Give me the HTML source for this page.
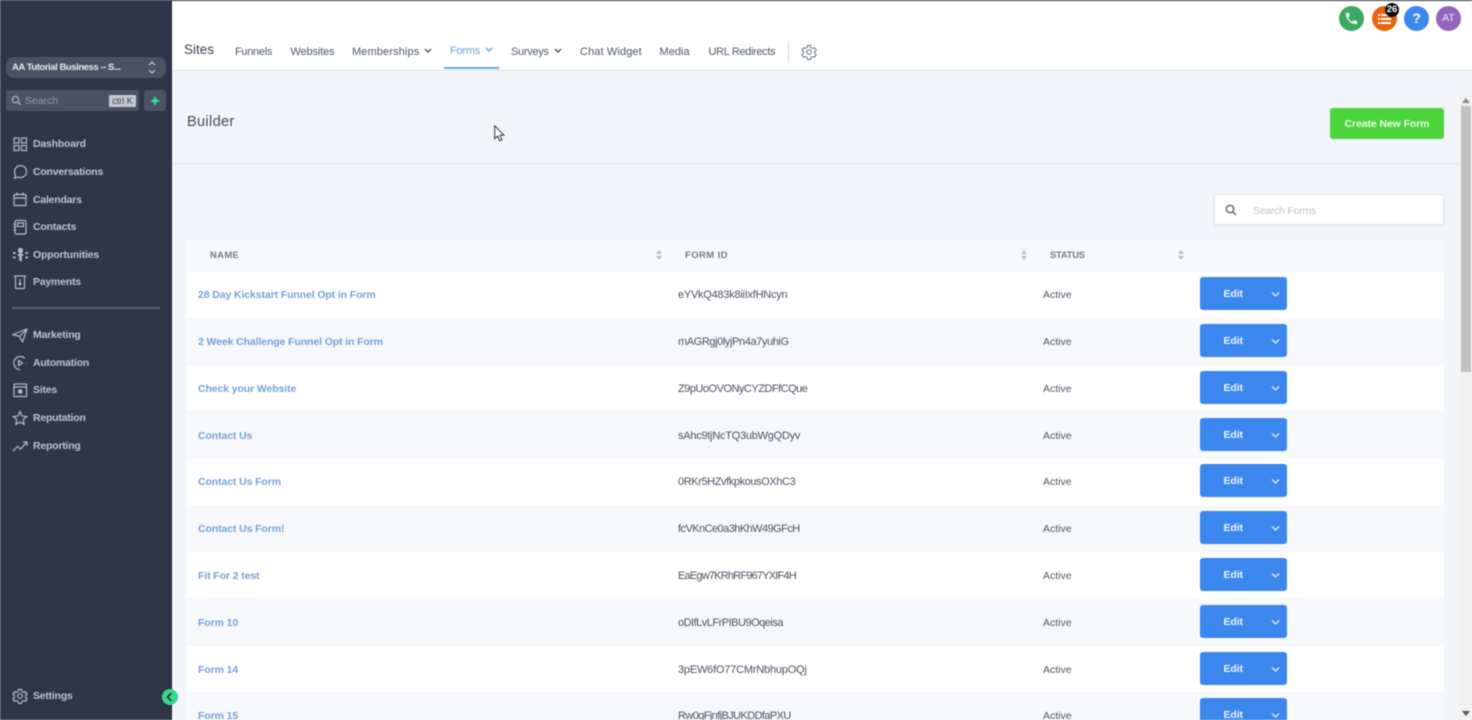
<!DOCTYPE html>
<html lang="en">
<head>
<meta charset="utf-8">
<title>Forms Builder</title>
<style>
html,body{margin:0;padding:0;width:1472px;height:720px;overflow:hidden;background:#f2f5f9;font-family:"Liberation Sans",Arial,sans-serif}
*{box-sizing:border-box}
.a{position:absolute;white-space:nowrap}
#root{position:absolute;left:0;top:0;width:1472px;height:720px;overflow:hidden;filter:blur(.5px)}
#side{position:absolute;left:0;top:0;width:172px;height:720px;background:#2d3748;border-right:1px solid #1d2430}
.nav{position:absolute;left:33px;font-size:10.5px;font-weight:bold;color:#bcc4cf;line-height:14px;white-space:nowrap;letter-spacing:-.22px}
.ic{position:absolute;left:12px;width:16px;height:16px;fill:none;stroke:#b4bcc8;stroke-width:1.2}
#top{position:absolute;left:172px;top:0;width:1300px;height:71px;background:#fff;border-bottom:1px solid #e3e6ea;border-top:1px solid #333}
.tab{position:absolute;top:45px;font-size:11px;line-height:14px;color:#4f5a68;white-space:nowrap;letter-spacing:.12px}
.circ{position:absolute;top:6px;width:25px;height:25px;border-radius:50%}
.row{position:absolute;left:186px;width:1258px;height:46px}
.w{background:#fff}.g{background:#f7f8fb}
.n{position:absolute;left:198px;margin-top:1px;font-size:10.5px;font-weight:bold;color:#74a2d6;line-height:14px;white-space:nowrap;letter-spacing:-.11px}
.i{position:absolute;left:678px;margin-top:1px;font-size:11px;color:#4a5360;line-height:14px;white-space:nowrap}
.s{position:absolute;left:1043px;margin-top:1px;font-size:10.5px;color:#4f5864;line-height:14px}
.b{position:absolute;left:1200px;width:87px;height:33px;background:#3b87ee;border-radius:3px;color:#fff}
.b span{position:absolute;left:23.5px;top:10px;font-size:10.5px;line-height:14px;font-weight:bold;color:#eef5ff;letter-spacing:-.1px}
.b svg{position:absolute;left:71px;top:14px;width:9px;height:7px;fill:none;stroke:#e6f0ff;stroke-width:1.3}
.h{position:absolute;top:250px;font-size:9.5px;line-height:12px;font-weight:bold;color:#757d88;letter-spacing:.3px}
.sort{position:absolute;top:250px;width:6px;height:10px;fill:#b7bdc6}
</style>
</head>
<body>
<div id="root">

<div id="side">
  <div class="a" style="left:6px;top:57px;width:160px;height:21px;border-radius:8px;background:#4a5363"></div>
  <div class="a" style="left:12px;top:61px;font-size:9.5px;line-height:13px;font-weight:bold;color:#e6e9ee;letter-spacing:-.44px">AA Tutorial Business -- S...</div>
  <svg class="a" style="left:147px;top:60px;width:10px;height:15px;fill:none;stroke:#c6ccd5;stroke-width:1.2" viewBox="0 0 10 15"><path d="M2 5l3-3 3 3M2 10l3 3 3-3"/></svg>
  <div class="a" style="left:6px;top:90px;width:133px;height:21px;border-radius:3px;background:#4a5363"></div>
  <svg class="a" style="left:11px;top:95px;width:11px;height:11px;fill:none;stroke:#a4acb8;stroke-width:1.3" viewBox="0 0 11 11"><circle cx="4.5" cy="4.5" r="3.2"/><path d="M7 7l3 3"/></svg>
  <div class="a" style="left:25px;top:94px;font-size:10.5px;line-height:14px;color:#8f98a5">Search</div>
  <div class="a" style="left:109px;top:95px;width:27px;height:12px;background:#c3c8cf;border-radius:1px;font-size:9px;line-height:12px;color:#3a4350;text-align:center">ctrl K</div>
  <div class="a" style="left:144px;top:90px;width:22px;height:21px;border-radius:3px;background:#4a5363"></div>
  <svg class="a" style="left:150px;top:96px;width:10px;height:10px;fill:#3ed49a" viewBox="0 0 10 10"><path d="M5 0L6.500 3.500 10 5 6.500 6.500 5 10 3.500 6.500 0 5 3.500 3.500z"/></svg>

  <svg class="ic" style="top:136px" viewBox="0 0 16 16"><rect x="2" y="2" width="5" height="5"/><rect x="9.5" y="2" width="5" height="5"/><rect x="2" y="9.5" width="5" height="5"/><rect x="9.5" y="9.5" width="5" height="5"/></svg>
  <div class="nav" style="top:137px">Dashboard</div>
  <svg class="ic" style="top:164px" viewBox="0 0 16 16"><path d="M2.500 14l1-3.200A6 6 0 1 1 6 13z"/></svg>
  <div class="nav" style="top:165px">Conversations</div>
  <svg class="ic" style="top:191px" viewBox="0 0 16 16"><rect x="2" y="3.500" width="12" height="11" rx="1"/><path d="M2 7h12M5 1.500v3M11 1.500v3"/></svg>
  <div class="nav" style="top:192.500px">Calendars</div>
  <svg class="ic" style="top:219px" viewBox="0 0 16 16"><rect x="3" y="1.500" width="11" height="13.500" rx="1.500"/><rect x="5.500" y="4" width="6" height="3.500"/><path d="M1.500 5h2.500M1.500 8h2.500M1.500 11h2.500"/></svg>
  <div class="nav" style="top:220px">Contacts</div>
  <svg class="ic" style="top:247px" viewBox="0 0 16 16"><circle cx="8.500" cy="3.500" r="2" fill="#b4bcc8"/><path d="M8.500 6v8" stroke-width="2.600"/><path d="M5.500 7.500l3 1.500 3-1.500" stroke-width="1.500"/><path d="M1 6h2.500M1 10.500h2.500M13.500 6h2.500M13.500 10.500h2.500" stroke-width="2"/></svg>
  <div class="nav" style="top:248px">Opportunities</div>
  <svg class="ic" style="top:274px" viewBox="0 0 16 16"><path d="M3.500 2h9v12.500h-9zM2 2h12M8 5v6M6.500 9.500L8 11l1.500-1.500"/></svg>
  <div class="nav" style="top:275px">Payments</div>

  <div class="a" style="left:12px;top:307px;width:148px;height:2px;background:#5b6474"></div>

  <svg class="ic" style="top:327px" viewBox="0 0 16 16"><path d="M1 7.500L15 2l-4.500 13-3-5.500zM7.500 9.500L15 2"/></svg>
  <div class="nav" style="top:328px">Marketing</div>
  <svg class="ic" style="top:355px" viewBox="0 0 16 16"><path d="M13 3.500A6.500 6.500 0 1 0 8 14.500M14.500 8v.5"/><path d="M6.500 5.500v5l4-2.500z"/></svg>
  <div class="nav" style="top:356px">Automation</div>
  <svg class="ic" style="top:382px" viewBox="0 0 16 16"><rect x="2" y="2" width="12.500" height="12.500"/><path d="M2 5h12.500"/><circle cx="8.200" cy="9.500" r="1.700" fill="#b4bcc8"/></svg>
  <div class="nav" style="top:383px">Sites</div>
  <svg class="ic" style="top:410px" viewBox="0 0 16 16"><path d="M8 1.500l2 4.500 4.800.5-3.600 3.200 1 4.800L8 12l-4.200 2.500 1-4.800L1.200 6.500 6 6z"/></svg>
  <div class="nav" style="top:411px">Reputation</div>
  <svg class="ic" style="top:438px" viewBox="0 0 16 16"><path d="M1 13l4.500-4.500 3 2.500L14.500 4.500M11 4h4v4"/></svg>
  <div class="nav" style="top:439px">Reporting</div>

  <svg class="ic" style="top:688px" viewBox="0 0 16 16"><circle cx="8" cy="8" r="2.300"/><path d="M6.500 1.500h3l.4 2 1.800 1 1.900-.7 1.500 2.600-1.500 1.300v1.600l1.500 1.300-1.500 2.600-1.900-.7-1.800 1-.4 2h-3l-.4-2-1.800-1-1.900.7L.9 10.600l1.500-1.300V7.700L.9 6.400l1.500-2.600 1.900.7 1.800-1z"/></svg>
  <div class="nav" style="top:689px">Settings</div>
</div>

<div id="top">
  <div class="a" style="left:12px;top:40px;font-size:13.5px;line-height:18px;color:#3a424e">Sites</div>
</div>
<div class="tab" style="left:235px;letter-spacing:-.3px">Funnels</div>
<div class="tab" style="left:290.500px;letter-spacing:-.13px">Websites</div>
<div class="tab" style="left:352px">Memberships</div>
<svg class="a" style="left:424px;top:48px;width:8px;height:6px;fill:none;stroke:#4f5a68;stroke-width:1.500" viewBox="0 0 8 6"><path d="M1 1l3 3 3-3"/></svg>
<div class="tab" style="left:450px;top:44px;color:#6ba5d6;letter-spacing:-.2px">Forms</div>
<svg class="a" style="left:485px;top:47px;width:8px;height:6px;fill:none;stroke:#6ba5d6;stroke-width:1.500" viewBox="0 0 8 6"><path d="M1 1l3 3 3-3"/></svg>
<div class="a" style="left:444px;top:67px;width:55px;height:1.500px;background:#6ba5d6"></div>
<div class="tab" style="left:511px;letter-spacing:-.3px">Surveys</div>
<svg class="a" style="left:554px;top:48px;width:8px;height:6px;fill:none;stroke:#4f5a68;stroke-width:1.500" viewBox="0 0 8 6"><path d="M1 1l3 3 3-3"/></svg>
<div class="tab" style="left:580px">Chat Widget</div>
<div class="tab" style="left:659.500px;letter-spacing:.05px">Media</div>
<div class="tab" style="left:708.500px;letter-spacing:-.34px">URL Redirects</div>
<div class="a" style="left:788px;top:41px;width:1px;height:22px;background:#d5d9de"></div>
<svg class="a" style="left:801px;top:44px;width:16px;height:16px;fill:none;stroke:#68717d;stroke-width:1" viewBox="0 0 16 16"><circle cx="8" cy="8" r="2.300"/><path d="M6.500 1.500h3l.4 2 1.800 1 1.900-.7 1.500 2.600-1.500 1.300v1.600l1.500 1.300-1.500 2.600-1.900-.7-1.800 1-.4 2h-3l-.4-2-1.800-1-1.900.7L.9 10.600l1.500-1.300V7.700L.9 6.400l1.500-2.600 1.900.7 1.800-1z"/></svg>

<div class="circ" style="left:1339px;background:#3aa962"></div>
<svg class="a" style="left:1344px;top:11px;width:15px;height:15px;fill:#fff" viewBox="0 0 24 24"><path d="M6.600 10.800a15 15 0 0 0 6.600 6.600l2.200-2.200a1 1 0 0 1 1-.25 11 11 0 0 0 3.600.6 1 1 0 0 1 1 1V20a1 1 0 0 1-1 1A17 17 0 0 1 3 4a1 1 0 0 1 1-1h3.500a1 1 0 0 1 1 1 11 11 0 0 0 .6 3.600 1 1 0 0 1-.25 1z"/></svg>
<div class="circ" style="left:1372px;background:#e8640f"></div>
<svg class="a" style="left:1378px;top:13px;width:13px;height:12px;fill:#fff" viewBox="0 0 13 12"><rect x="0" y="1" width="2" height="2"/><rect x="3" y="1" width="7" height="2"/><rect x="0" y="5" width="2" height="2"/><rect x="3" y="5" width="10" height="2"/><rect x="0" y="9" width="2" height="2"/><rect x="3" y="9" width="10" height="2"/></svg>
<div class="a" style="left:1385px;top:3px;width:14px;height:14px;border-radius:50%;background:#0b0b0d;color:#fff;font-size:9.500px;line-height:14px;font-weight:bold;text-align:center">26</div>
<div class="circ" style="left:1404px;background:#3b87ee;color:#fff;font-size:14px;line-height:25px;font-weight:bold;text-align:center">?</div>
<div class="circ" style="left:1436px;background:#9365bd;color:#eee6f5;font-size:10.500px;line-height:25px;text-align:center">AT</div>

<div class="a" style="left:187px;top:112.500px;font-size:14.500px;line-height:18px;color:#434b57;letter-spacing:.35px">Builder</div>
<div class="a" style="left:172px;top:163px;width:1288px;height:1px;background:#e2e5e9"></div>

<svg class="a" style="left:494px;top:125px;width:11px;height:17px" viewBox="0 0 11 17"><path d="M.7.800v13l3-2.700 2 4.600 2.300-1-2-4.500h4z" fill="#fff" stroke="#333" stroke-width="1"/></svg>

<div class="a" style="left:1330px;top:108px;width:114px;height:31px;border-radius:3px;background:#4cd43a;color:#e8fbe4;font-size:10.500px;line-height:32px;font-weight:bold;text-align:center;letter-spacing:-.1px">Create New Form</div>

<div class="a" style="left:1214px;top:194px;width:230px;height:31px;background:#fff;border:1px solid #e2e5e9;border-radius:2px;box-shadow:0 1px 2px rgba(0,0,0,.06)"></div>
<svg class="a" style="left:1225px;top:204px;width:12px;height:12px;fill:none;stroke:#5a626d;stroke-width:1.400" viewBox="0 0 12 12"><circle cx="5" cy="5" r="3.700"/><path d="M8 8l3 3"/></svg>
<div class="a" style="left:1253px;top:204px;font-size:10.500px;line-height:14px;color:#bcc2ca;letter-spacing:-.25px">Search Forms</div>

<div class="a" style="left:186px;top:240px;width:1258px;height:32px;background:#f7f9fb"></div>
<div class="h" style="left:210px">NAME</div>
<svg class="sort" style="left:656px" viewBox="0 0 6 10"><path d="M3 0l3 4H0zM3 10L0 6h6z"/></svg>
<div class="h" style="left:685px;letter-spacing:.4px">FORM ID</div>
<svg class="sort" style="left:1021px" viewBox="0 0 6 10"><path d="M3 0l3 4H0zM3 10L0 6h6z"/></svg>
<div class="h" style="left:1050px;letter-spacing:-.3px">STATUS</div>
<svg class="sort" style="left:1178px" viewBox="0 0 6 10"><path d="M3 0l3 4H0zM3 10L0 6h6z"/></svg>

<div class="row w" style="top:272px"></div>
<div class="row g" style="top:318px"></div>
<div class="row w" style="top:365px"></div>
<div class="row g" style="top:412px"></div>
<div class="row w" style="top:459px"></div>
<div class="row g" style="top:505px"></div>
<div class="row w" style="top:552px"></div>
<div class="row g" style="top:599px"></div>
<div class="row w" style="top:646px"></div>
<div class="row g" style="top:692px;height:28px"></div>

<div class="n" style="top:287px">28 Day Kickstart Funnel Opt in Form</div>
<div class="i" style="top:287px;letter-spacing:-.25px">eYVkQ483k8iiIxfHNcyn</div>
<div class="s" style="top:287px">Active</div>
<div class="b" style="top:277px"><span>Edit</span><svg viewBox="0 0 9 7"><path d="M1 1.500l3.500 3.500L8 1.500"/></svg></div>

<div class="n" style="top:334px">2 Week Challenge Funnel Opt in Form</div>
<div class="i" style="top:334px;letter-spacing:-.4px">mAGRgj0lyjPn4a7yuhiG</div>
<div class="s" style="top:334px">Active</div>
<div class="b" style="top:324px"><span>Edit</span><svg viewBox="0 0 9 7"><path d="M1 1.500l3.500 3.500L8 1.500"/></svg></div>

<div class="n" style="top:381px">Check your Website</div>
<div class="i" style="top:381px;letter-spacing:-.5px">Z9pUoOVONyCYZDFfCQue</div>
<div class="s" style="top:381px">Active</div>
<div class="b" style="top:371px"><span>Edit</span><svg viewBox="0 0 9 7"><path d="M1 1.500l3.500 3.500L8 1.500"/></svg></div>

<div class="n" style="top:428px">Contact Us</div>
<div class="i" style="top:428px;letter-spacing:-.25px">sAhc9tjNcTQ3ubWgQDyv</div>
<div class="s" style="top:428px">Active</div>
<div class="b" style="top:418px"><span>Edit</span><svg viewBox="0 0 9 7"><path d="M1 1.500l3.500 3.500L8 1.500"/></svg></div>

<div class="n" style="top:474px">Contact Us Form</div>
<div class="i" style="top:474px;letter-spacing:-.4px">0RKr5HZvfkpkousOXhC3</div>
<div class="s" style="top:474px">Active</div>
<div class="b" style="top:464px"><span>Edit</span><svg viewBox="0 0 9 7"><path d="M1 1.500l3.500 3.500L8 1.500"/></svg></div>

<div class="n" style="top:521px">Contact Us Form!</div>
<div class="i" style="top:521px;letter-spacing:-.55px">fcVKnCe0a3hKhW49GFcH</div>
<div class="s" style="top:521px">Active</div>
<div class="b" style="top:511px"><span>Edit</span><svg viewBox="0 0 9 7"><path d="M1 1.500l3.500 3.500L8 1.500"/></svg></div>

<div class="n" style="top:568px">Fit For 2 test</div>
<div class="i" style="top:568px;letter-spacing:-.8px">EaEgw7KRhRF967YXIF4H</div>
<div class="s" style="top:568px">Active</div>
<div class="b" style="top:558px"><span>Edit</span><svg viewBox="0 0 9 7"><path d="M1 1.500l3.500 3.500L8 1.500"/></svg></div>

<div class="n" style="top:615px">Form 10</div>
<div class="i" style="top:615px;letter-spacing:-.5px">oDIfLvLFrPIBU9Oqeisa</div>
<div class="s" style="top:615px">Active</div>
<div class="b" style="top:605px"><span>Edit</span><svg viewBox="0 0 9 7"><path d="M1 1.500l3.500 3.500L8 1.500"/></svg></div>

<div class="n" style="top:662px">Form 14</div>
<div class="i" style="top:662px;letter-spacing:-.2px">3pEW6fO77CMrNbhupOQj</div>
<div class="s" style="top:662px">Active</div>
<div class="b" style="top:652px"><span>Edit</span><svg viewBox="0 0 9 7"><path d="M1 1.500l3.500 3.500L8 1.500"/></svg></div>

<div class="n" style="top:708px">Form 15</div>
<div class="i" style="top:708px;letter-spacing:-.6px">Rw0qFjnfjBJUKDDfaPXU</div>
<div class="s" style="top:708px">Active</div>
<div class="b" style="top:698px"><span>Edit</span><svg viewBox="0 0 9 7"><path d="M1 1.500l3.500 3.500L8 1.500"/></svg></div>

<div class="a" style="left:1460px;top:96px;width:12px;height:624px;background:#f1f1f1"></div>
<div class="a" style="left:1461px;top:106px;width:10px;height:266px;background:#c1c1c1"></div>
<svg class="a" style="left:1462px;top:98px;width:8px;height:5px;fill:#8a8a8a" viewBox="0 0 8 5"><path d="M4 0l4 5H0z"/></svg>
<svg class="a" style="left:1462px;top:711px;width:8px;height:5px;fill:#555" viewBox="0 0 8 5"><path d="M4 5L0 0h8z"/></svg>

<div class="a" style="left:162px;top:689px;width:16px;height:16px;border-radius:50%;background:#3dd58c"></div>
<svg class="a" style="left:166px;top:692px;width:7px;height:10px;fill:none;stroke:#14532d;stroke-width:1.800" viewBox="0 0 7 10"><path d="M5.500 1L1.500 5l4 4"/></svg>

</div>
</body>
</html>
